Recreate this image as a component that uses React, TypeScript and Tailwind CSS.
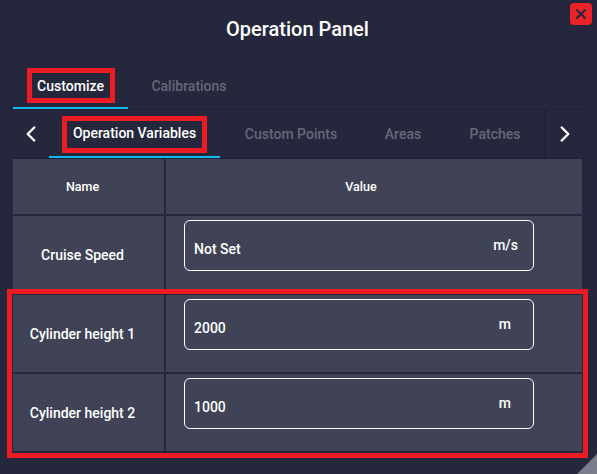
import { ChevronLeft, ChevronRight, X } from "lucide-react";

const rows = [
  { name: "Cruise Speed", value: "Not Set", unit: "m/s", unitClass: "pr-[15px] -mt-[1px]" },
  { name: "Cylinder height 1", value: "2000", unit: "m", unitClass: "pr-[22px]" },
  { name: "Cylinder height 2", value: "1000", unit: "m", unitClass: "pr-[22px]" },
];

const subTabs = [
  { label: "Custom Points", className: "w-[120px] ml-[11px]" },
  { label: "Areas", className: "w-[48px] ml-[28px]" },
  { label: "Patches", className: "w-[60px] ml-[38px]" },
];

export default function App() {
  return (
    <div className="relative h-[474px] w-[597px] overflow-hidden bg-[#25273c] font-['Roboto',sans-serif] text-white">
      <button className="absolute right-[5px] top-[3px] flex h-[22px] w-[22px] items-center justify-center rounded-[4px] bg-[#ed2128] text-[#25273c]">
        <X size={16} strokeWidth={3} />
      </button>

      <h1 className="flex h-[65px] items-center justify-center pb-[8px] pr-[2px] text-[20px] font-medium leading-none">
        Operation Panel
      </h1>

      <div className="mx-[13px] flex h-[45px] border-b border-[#1f2134] text-[14px] font-medium">
        <div className="flex h-[44px] w-[115px] items-center justify-center border-b-2 border-[#0fb9f2]">
          Customize
        </div>
        <div className="flex w-[122px] items-center justify-center pb-[1px] text-[#666879]">Calibrations</div>
      </div>

      <div className="mx-[13px] flex h-[49px] border-b border-[#1f2134] text-[14px] font-medium">
        <div className="flex w-[36px] items-center justify-center">
          <ChevronLeft size={26} strokeWidth={2.25} />
        </div>
        <div className="flex h-[48px] w-[171px] items-center justify-center border-b-2 border-[#0fb9f2] pt-[1px]">
          Operation Variables
        </div>
        {subTabs.map((tab) => (
          <div key={tab.label} className={`flex items-center justify-center text-[#666879] ${tab.className}`}>
            {tab.label}
          </div>
        ))}
        <div className="ml-[19px] flex h-[48px] flex-1 items-center justify-center border-l border-dotted border-[#17182a] pl-[1px]">
          <ChevronRight size={26} strokeWidth={2.25} />
        </div>
      </div>

      <div className="mx-[13px] w-[569px] bg-[#404356]">
        <div className="flex h-[57px] border-b-2 border-[#25273c] text-[12.5px] font-medium">
          <div className="flex w-[153px] items-center justify-center border-r-2 border-[#25273c] pr-[12px] pt-[2px]">
            Name
          </div>
          <div className="flex flex-1 items-center justify-center pr-[26px] pt-[2px]">Value</div>
        </div>
        {rows.map((row) => (
          <div key={row.name} className="flex h-[79px] border-b-2 border-[#25273c] text-[14px] font-medium">
            <div className="flex w-[153px] items-center justify-center border-r-2 border-[#25273c] pr-[12px] pt-[1px]">
              {row.name}
            </div>
            <div className="flex-1 pl-[18px] pt-[4px]">
              <div className="flex h-[51px] w-[350px] items-center justify-between rounded-[6px] border border-white pl-[9px]">
                <span className="pt-[7px]">{row.value}</span>
                <span className={row.unitClass}>{row.unit}</span>
              </div>
            </div>
          </div>
        ))}
      </div>

      {/* red annotation boxes */}
      <div className="absolute left-[27px] top-[68px] h-[35px] w-[88px] border-[5px] border-[#ed1c24]" />
      <div className="absolute left-[62px] top-[116px] h-[37px] w-[145px] border-[5px] border-[#ed1c24]" />
      <div className="absolute left-[7px] top-[289px] h-[169px] w-[581px] border-[5px] border-[#ed1c24]" />

      {/* resize corner */}
      <div className="absolute bottom-0 right-0 h-[20px] w-[20px] bg-[#7a7c8c] [clip-path:polygon(100%_0,100%_100%,0_100%)]" />
    </div>
  );
}
